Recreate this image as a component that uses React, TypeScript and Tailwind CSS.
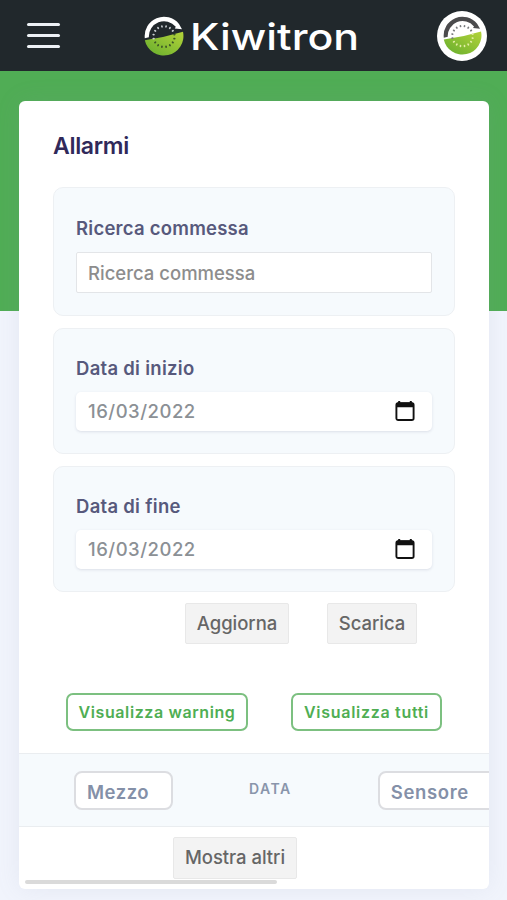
import React from "react";

const dots = Array.from({ length: 16 }, (_, i) => {
  const a = ((i + 0.5) / 16) * Math.PI * 2;
  return { x: 20 + Math.cos(a) * 10.6, y: 20.6 + Math.sin(a) * 10.4, deg: (a * 180) / Math.PI };
});

function Kiwi({ size, arc, seedTop, seedBottom }: { size: number; arc: string; seedTop: string; seedBottom: string }) {
  return (
    <svg width={size} height={size} viewBox="0 0 40 40" className="block shrink-0" aria-hidden="true">
      <defs>
        <linearGradient id={"kiwi" + size} x1="0" y1="1" x2="1" y2="0">
          <stop offset="0" stopColor="#65ad2e" />
          <stop offset="1" stopColor="#b3d339" />
        </linearGradient>
      </defs>
      <path d="M.8 22.2A19.3 19.3 0 0 1 35 7.9L38 13.2 30.8 12.4 31.8 10.7A15.2 15.2 0 0 0 4.9 21.3Z" fill={arc} />
      <path d="M.8 24.2Q20 21.6 39 15.8A19.4 19.4 0 0 1 .8 24.2Z" fill={"url(#kiwi" + size + ")"} />
      {dots.map((d, i) => (
        <ellipse
          key={i}
          cx={d.x}
          cy={d.y}
          rx="1.25"
          ry="0.9"
          transform={`rotate(${d.deg} ${d.x} ${d.y})`}
          fill={d.y > 24.8 - d.x * 0.22 ? seedBottom : seedTop}
        />
      ))}
    </svg>
  );
}

function CalendarIcon() {
  return (
    <svg width="20" height="22" viewBox="0 0 20 22" className="block -translate-y-px" aria-hidden="true">
      <path d="M4.2 1v3M15.8 1v3" stroke="#111" strokeWidth="2" />
      <rect x="1.4" y="3.2" width="17.2" height="16.8" rx="1.8" fill="none" stroke="#111" strokeWidth="1.9" />
      <path d="M1 4.4Q1 2.4 3 2.4H17Q19 2.4 19 4.4V7.2H1Z" fill="#111" />
    </svg>
  );
}

function DatePanel({ label }: { label: string }) {
  return (
    <section className="h-[126px] rounded-[10px] border border-[#edf0f3] bg-[#f6fafd] px-[22px] pt-[27px]">
      <div className="h-6 text-[18.5px] leading-6 font-semibold tracking-[0.28px] text-[#57597c]">{label}</div>
      <div className="mt-3 flex h-[39px] items-center justify-between rounded-[5px] bg-white pr-[17px] pl-3 shadow-[0_1px_3px_rgba(50,50,93,0.13)]">
        <span className="text-[18.5px] font-[450] tracking-[0.5px] text-[#8b9095]">16/03/2022</span>
        <CalendarIcon />
      </div>
    </section>
  );
}

const grayButton =
  "flex shrink-0 items-center justify-center rounded-[2px] border border-[#e8e8e8] bg-[#f3f3f3] text-[18.5px] font-[450] tracking-[-0.05px] text-[#666] whitespace-nowrap";
const greenButton =
  "flex h-[38px] shrink-0 items-center justify-center rounded-[7px] border-2 border-[#7cc080] bg-white pb-px text-[16px] font-semibold text-[#4fae53] whitespace-nowrap";
const filterBox =
  "flex h-[39px] shrink-0 items-center rounded-[8px] border-2 border-[#dcdde1] bg-white pt-[5px] pl-[11px] text-[18.5px] font-semibold text-[#8490a8]";

export default function App() {
  return (
    <div className="h-[900px] w-[507px] overflow-hidden bg-[#f1f4fc] font-['Inter',sans-serif]">
      <header className="flex h-[71px] items-center bg-[#21282c]">
        <button aria-label="Menu" className="ml-[27px] flex w-[33px] flex-col gap-[8px]">
          <span className="h-[3px] rounded-full bg-[#edf1f5]" />
          <span className="h-[3px] rounded-full bg-[#edf1f5]" />
          <span className="h-[3px] rounded-full bg-[#edf1f5]" />
        </button>
        <div className="ml-[84px] flex items-center">
          <Kiwi size={40} arc="#fff" seedTop="#c9ced2" seedBottom="#3c5628" />
          <svg width="180" height="44" viewBox="0 0 180 44" className="ml-[6px] block">
            <text x="0" y="35.5" textLength="169" lengthAdjust="spacingAndGlyphs" fill="#fff" className="font-['Inter',sans-serif] text-[37px] font-medium">
              Kiwitron
            </text>
          </svg>
        </div>
        <div className="ml-[67px] flex size-[50px] shrink-0 items-center justify-center rounded-full bg-white">
          <Kiwi size={39} arc="#4b4b4d" seedTop="#77797c" seedBottom="#e2eda6" />
        </div>
      </header>
      <div className="h-[829px] bg-[linear-gradient(#50ad55_240px,#f1f4fc_240px)] px-[19px] pt-[30px]">
        <main className="flex h-[788px] w-[470px] flex-col overflow-hidden rounded-[6px] bg-white shadow-[0_0_24px_rgba(136,152,170,0.12)]">
          <h1 className="mt-[31px] ml-[34px] h-7 text-[23px] leading-7 font-semibold tracking-[-0.3px] text-[#30295a]">Allarmi</h1>
          <div className="mt-[27px] ml-[34px] flex w-[402px] flex-col gap-3">
            <section className="h-[129px] rounded-[10px] border border-[#edf0f3] bg-[#f6fafd] px-[22px] pt-[28px]">
              <div className="h-6 text-[18.5px] leading-6 font-semibold tracking-[0.24px] text-[#57597c]">Ricerca commessa</div>
              <input
                aria-label="Ricerca commessa"
                placeholder="Ricerca commessa"
                className="mt-[12px] block h-[41px] w-[356px] rounded-[2px] border border-[#e3e5e8] bg-white px-[11px] text-[18.5px] font-[450] text-[#888] placeholder:text-[#8d8d8d]"
              />
            </section>
            <DatePanel label="Data di inizio" />
            <DatePanel label="Data di fine" />
          </div>
          <div className="mt-[11px] ml-[166px] flex gap-[38px]">
            <button className={grayButton + " h-[41px] w-[104px]"}>Aggiorna</button>
            <button className={grayButton + " h-[41px] w-[90px]"}>Scarica</button>
          </div>
          <div className="mt-[49px] ml-[47px] flex gap-[43px]">
            <button className={greenButton + " w-[182px] tracking-[0.6px]"}>Visualizza warning</button>
            <button className={greenButton + " w-[151px] tracking-[0.7px]"}>Visualizza tutti</button>
          </div>
          <div className="mt-[22px] flex h-[74px] shrink-0 items-center border-y border-[#eaedf0] bg-[#f6fafd] pl-[55px]">
            <div className={filterBox + " w-[99px] tracking-[0.5px]"}>Mezzo</div>
            <div className="ml-[76px] w-[43px] pb-[3px] text-[14px] font-semibold tracking-[1.5px] text-[#8995ab]">DATA</div>
            <div className={filterBox + " ml-[86px] w-[130px] tracking-[0.65px]"}>Sensore</div>
          </div>
          <button className={grayButton + " mt-[10px] ml-[154px] h-[42px] w-[124px]"}>Mostra altri</button>
          <div className="mt-px ml-[6px] h-[4px] w-[252px] shrink-0 rounded-full bg-[#dadada]" />
        </main>
      </div>
    </div>
  );
}
